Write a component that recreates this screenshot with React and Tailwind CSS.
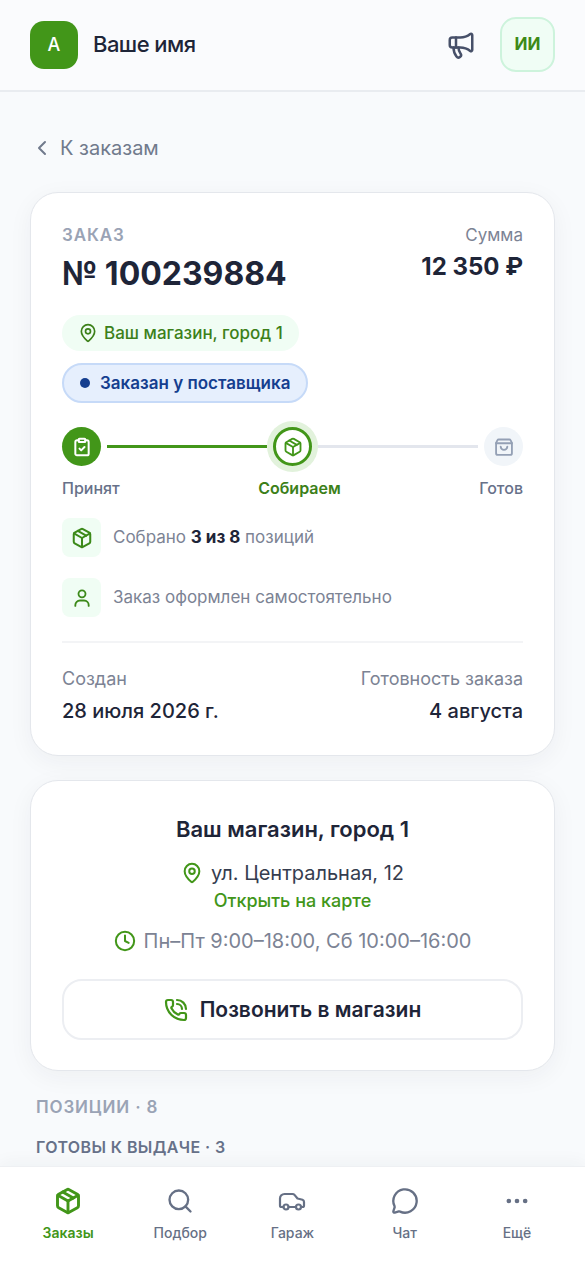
import React from "react";
import { Package, Megaphone, ChevronLeft, MapPin, ClipboardCheck, Clock, PhoneCall, Search, MessageCircle, Ellipsis } from "lucide-react";

function CarIcon({ className }) {
  return (
    <svg viewBox="0 0 28 28" fill="none" stroke="currentColor" strokeWidth="2.2" strokeLinecap="round" strokeLinejoin="round" className={className} aria-hidden="true">
      <path d="M5.500 20H3.500A1.500 1.500 0 0 1 2 18.500V11.500A4.500 4.500 0 0 1 6.500 7h8c.8 0 1.500.3 2 .9L19.500 11.500l5 1.300A2.300 2.300 0 0 1 26 15V18.500a1.500 1.500 0 0 1-1.500 1.500h-1.500" />
      <path d="M10.500 20h7.500" />
      <circle cx="8" cy="20" r="2.500" />
      <circle cx="20.500" cy="20" r="2.500" />
    </svg>
  );
}

function BagIcon({ className }) {
  return (
    <svg viewBox="0 0 24 24" fill="none" stroke="currentColor" strokeWidth="2.2" strokeLinecap="round" strokeLinejoin="round" className={className} aria-hidden="true">
      <path d="M2.500 7v12.500a2 2 0 0 0 2 2h15a2 2 0 0 0 2-2V7l-1.500-3a2 2 0 0 0-1.800-1H5.800A2 2 0 0 0 4 4L2.500 7z" />
      <path d="M2.500 7.500h19" />
      <path d="M16 11.500a4 4 0 0 1-8 0" />
    </svg>
  );
}

function PersonIcon({ className }) {
  return (
    <svg viewBox="0 0 24 24" fill="none" stroke="currentColor" strokeWidth="2.2" strokeLinecap="round" strokeLinejoin="round" className={className} aria-hidden="true">
      <circle cx="12" cy="7" r="4.200" />
      <path d="M4 21.500v-1a5.500 5.500 0 0 1 5.500-5.500h5a5.500 5.500 0 0 1 5.500 5.500v1" />
    </svg>
  );
}

const tabs = [
  { label: "Заказы", Icon: Package, active: true },
  { label: "Подбор", Icon: Search },
  { label: "Гараж", Icon: CarIcon },
  { label: "Чат", Icon: MessageCircle },
  { label: "Ещё", Icon: Ellipsis },
];

export default function App() {
  return (
    <div className="flex min-h-screen flex-col bg-[#f8fafc] font-['Inter','Noto_Sans',sans-serif] text-[#1e2538]">
      <header className="flex items-center gap-[15px] border-b-2 border-[#e9ecf0] bg-[#fafbfd] px-[30px] pt-[17px] pb-[18px]">
        <span className="flex size-12 items-center justify-center rounded-[14px] bg-[#429619] text-lg font-medium text-white">А</span>
        <span className="flex-1 text-[22px] font-medium tracking-tight">Ваше имя</span>
        <button type="button" aria-label="Объявления" className="flex size-12 items-center justify-center text-[#475069]">
          <Megaphone className="size-[30px]" />
        </button>
        <button type="button" className="flex size-[55px] items-center justify-center rounded-2xl border-2 border-[#cdf3dc] bg-[#f0fdf5] text-[17px] font-bold text-[#3d8a17]">ИИ</button>
      </header>

      <main className="flex flex-1 flex-col px-[30px] pt-10">
        <a href="#orders" className="flex items-center gap-1.5 self-start text-xl leading-8 text-[#717a8c]">
          <ChevronLeft className="size-6" />
          К заказам
        </a>

        <section className="mt-7 rounded-[28px] border border-[#e4e7ec] bg-white px-[31px] pt-7 pb-7 shadow-[0_6px_24px_rgba(30,40,60,0.05)]">
          <div className="flex justify-between">
            <div>
              <p className="text-[17px] font-semibold leading-7 tracking-wider text-[#9aa3b5]">ЗАКАЗ</p>
              <h1 className="text-[32px] font-bold leading-[50px]">№ 100239884</h1>
            </div>
            <div className="text-right">
              <p className="text-[17px] leading-7 text-[#7c8394]">Сумма</p>
              <p className="text-2xl font-bold leading-9">12 350 ₽</p>
            </div>
          </div>

          <div className="mt-4 flex flex-col items-start gap-3">
            <span className="flex items-center gap-1.5 rounded-full bg-[#f0fdf4] px-4 text-[17px] font-medium leading-9 text-[#3c8019]">
              <MapPin className="size-5" />
              Ваш магазин, город 1
            </span>
            <span className="flex items-center gap-2.5 rounded-full border-2 border-[#c6daf8] bg-[#e6effd] px-4 text-[17px] font-semibold leading-9 text-[#153e8f]">
              <span className="size-2.5 rounded-full bg-[#153e8f]" />
              Заказан у поставщика
            </span>
          </div>

          <div className="mt-6 flex items-center gap-1.5">
            <span className="flex size-[39px] items-center justify-center rounded-full bg-[#429619] text-white">
              <ClipboardCheck className="size-5" strokeWidth={2.4} />
            </span>
            <span className="h-[3px] flex-1 bg-[#429619]" />
            <span className="flex size-[39px] items-center justify-center rounded-full border-3 border-[#429619] bg-white text-[#429619] ring-6 ring-[#e2f2dc]">
              <Package className="size-5" strokeWidth={2.2} />
            </span>
            <span className="h-[3px] flex-1 bg-[#e3e6ed]" />
            <span className="flex size-[39px] items-center justify-center rounded-full bg-[#f1f5f9] text-[#94a0b5]">
              <BagIcon className="size-5" />
            </span>
          </div>
          <div className="mt-2 flex justify-between text-base font-medium leading-7 text-[#677189]">
            <span>Принят</span>
            <span className="font-semibold text-[#3c8019]">Собираем</span>
            <span>Готов</span>
          </div>

          <div className="mt-4 flex items-center gap-3 text-[17px] text-[#7c8394]">
            <span className="flex size-[39px] items-center justify-center rounded-lg bg-[#f0fdf4] text-[#3c8a19]">
              <Package className="size-[22px]" strokeWidth={2.2} />
            </span>
            <p>Собрано <b className="font-bold text-[#1e2538]">3 из 8</b> позиций</p>
          </div>
          <div className="mt-[21px] flex items-center gap-3 text-[17px] text-[#7c8394]">
            <span className="flex size-[39px] items-center justify-center rounded-lg bg-[#f0fdf4] text-[#3c8a19]">
              <PersonIcon className="size-5" />
            </span>
            <p>Заказ оформлен самостоятельно</p>
          </div>

          <dl className="mt-6 flex justify-between border-t-2 border-[#f3f4f6] pt-5">
            <div>
              <dt className="text-lg leading-8 text-[#7c8394]">Создан</dt>
              <dd className="text-xl font-medium leading-8">28 июля 2026 г.</dd>
            </div>
            <div className="text-right">
              <dt className="text-lg leading-8 text-[#7c8394]">Готовность заказа</dt>
              <dd className="text-xl font-medium leading-8">4 августа</dd>
            </div>
          </dl>
        </section>

        <section className="mt-6 flex flex-col items-center rounded-[28px] border border-[#e4e7ec] bg-white px-[31px] pt-8 pb-[30px] shadow-[0_6px_24px_rgba(30,40,60,0.05)]">
          <h2 className="text-[22px] font-semibold leading-8">Ваш магазин, город 1</h2>
          <p className="mt-3 flex items-center gap-2 text-xl leading-8 text-[#353d4f]">
            <MapPin className="size-[22px] text-[#429619]" strokeWidth={2.2} />
            ул. Центральная, 12
          </p>
          <a href="#map" className="text-lg font-medium leading-6 text-[#429619]">Открыть на карте</a>
          <p className="mt-3 flex items-center gap-2 text-xl leading-8 text-[#7c8394]">
            <Clock className="size-[22px] text-[#429619]" strokeWidth={2.2} />
            Пн–Пт 9:00–18:00, Сб 10:00–16:00
          </p>
          <button type="button" className="mt-[22px] flex h-[61px] w-full items-center justify-center gap-3 rounded-[20px] border-2 border-[#eceef2] text-[21px] font-semibold">
            <PhoneCall className="size-6 text-[#429619]" strokeWidth={2.2} />
            Позвонить в магазин
          </button>
        </section>

        <h2 className="mt-[22px] px-1.5 text-[17px] font-semibold leading-7 tracking-wider text-[#9aa3b5]">ПОЗИЦИИ · 8</h2>
        <h3 className="mt-3 px-1.5 text-base font-semibold leading-7 tracking-wide text-[#677189]">ГОТОВЫ К ВЫДАЧЕ · 3</h3>
      </main>

      <nav className="sticky bottom-0 grid h-[100px] grid-cols-5 border-t border-[#eef0f3] bg-white px-3 shadow-[0_-4px_16px_rgba(30,40,60,0.04)]">
        {tabs.map(({ label, Icon, active }) => (
          <a key={label} href="#tab" className={active ? "flex flex-col items-center gap-2 pt-5 text-sm font-semibold text-[#429619]" : "flex flex-col items-center gap-2 pt-5 text-sm font-medium text-[#667085]"}>
            <Icon className="size-7" strokeWidth={active ? 2.5 : 2} />
            {label}
          </a>
        ))}
      </nav>
    </div>
  );
}
